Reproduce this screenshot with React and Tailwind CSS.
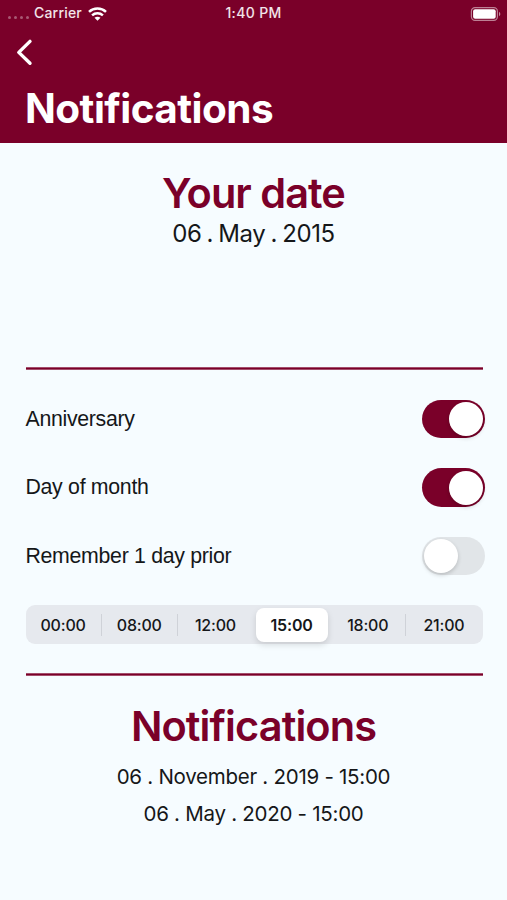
const times = ['00:00', '08:00', '12:00', '15:00', '18:00', '21:00'];

function StatusBar() {
  return (
    <div className="grid h-[27px] grid-cols-3 items-center pl-2 pr-[6px] text-[14px] font-medium leading-[25px] tracking-[0.2px] text-white/90">
      <div className="flex items-center">
        <div className="mr-[5px] mt-[7px] flex gap-[3px]">
          {[0, 1, 2, 3].map((i) => (
            <span key={i} className="size-[3px] rounded-full bg-white/35" />
          ))}
        </div>
        <span className="pb-[2px]">Carrier</span>
        <svg className="ml-[6px]" width="19" height="14" viewBox="0 0 19 14" fill="none" stroke="white" strokeWidth="2.5">
          <path d="M1 4.9C5.7 .4 13.3 .4 18 4.9" />
          <path d="M4.1 8.3C7.1 5.5 11.9 5.5 14.9 8.3" />
          <path d="M9.5 13.8L6.5 10.8C8.2 9.3 10.8 9.3 12.5 10.8Z" fill="white" stroke="none" />
        </svg>
      </div>
      <span className="-ml-[2px] pb-[2px] text-center tracking-[0.35px]">1:40 PM</span>
      <svg className="justify-self-end" width="31" height="14" viewBox="0 0 31 14">
        <rect x="1.4" y=".6" width="26" height="12.8" rx="3.6" fill="none" stroke="white" strokeOpacity=".5" strokeWidth="1.2" />
        <rect x="3.1" y="2.3" width="22.6" height="9.4" rx="2" fill="white" />
        <path d="M29 4.8C30.8 5.6 30.8 8.4 29 9.2Z" fill="white" fillOpacity=".55" />
      </svg>
    </div>
  );
}

function Toggle({ on }) {
  return (
    <div className={`flex h-[38.5px] w-[63px] items-center rounded-full px-[2px] ${on ? 'justify-end bg-[#7a0029]' : 'justify-start bg-[#e1e5e8]'}`}>
      <div className="size-[34px] rounded-full bg-white shadow-[0_2px_4px_rgba(0,0,0,0.18)]" />
    </div>
  );
}

function SettingRow({ label, on }) {
  return (
    <div className="flex h-[68.4px] items-center justify-between">
      <span className="pt-[1.6px] font-['Liberation_Sans',sans-serif] text-[21.3px] tracking-[-0.3px] text-[#151719]">{label}</span>
      <Toggle on={on} />
    </div>
  );
}

function Divider() {
  return <div className="ml-[25.5px] mr-[24.5px] h-[3px] border-y border-[#a34e6b] bg-[#7a0029]" />;
}

export default function App() {
  return (
    <div className="h-[900px] w-[507px] overflow-hidden bg-[#f6fcff] font-['Inter',sans-serif] text-[#151719]">
      <header className="h-[142.5px] bg-[#7a0029]">
        <StatusBar />
        <svg className="ml-[14.5px] mt-[11px]" width="18" height="28" viewBox="0 0 18 28" fill="none" stroke="white" strokeWidth="3.4" strokeLinecap="round" strokeLinejoin="round">
          <path d="M15 3.4L3.8 14.4L15 25.3" />
        </svg>
        <h1 className="ml-[25px] mt-[18px] text-[40.5px] font-bold leading-[50px] tracking-[-0.55px] text-white">Notifications</h1>
      </header>

      <section className="h-[224.5px] pt-[24px] text-center">
        <h2 className="text-[41.5px] font-semibold leading-[52px] tracking-[-0.98px] text-[#7a0029]">Your date</h2>
        <p className="mt-px text-[24px] leading-[28px] tracking-[-0.4px] [word-spacing:-1.2px]">06 . May . 2015</p>
      </section>

      <Divider />

      <section className="h-[235px] pl-[25.5px] pr-[22px] pt-[15px]">
        <SettingRow label="Anniversary" on />
        <SettingRow label="Day of month" on />
        <SettingRow label="Remember 1 day prior" on={false} />
      </section>

      <div className="ml-[25.5px] mr-[24.5px] grid h-[39px] grid-cols-6 rounded-[9px] bg-[#e6e9ee]">
        {times.map((time, i) => (
          <div
            key={time}
            className={`my-[2.5px] flex items-center justify-center pt-px text-[16px] tracking-[-0.2px] ${
              i === 3
                ? 'ml-[2px] mr-[2px] rounded-[8px] bg-white font-semibold shadow-[0_3px_6px_rgba(0,0,0,0.13)]'
                : 'font-medium'
            }`}
          >
            <span className="flex-1 pr-px text-center">{time}</span>
            {[0, 1, 4].includes(i) && <span className="-ml-px h-[22px] w-px bg-[#cfd2d8]" />}
          </div>
        ))}
      </div>

      <div className="h-[29px]" />
      <Divider />

      <section className="pt-[24px] text-center">
        <h2 className="text-[41.5px] font-semibold leading-[52px] tracking-[-0.9px] text-[#7a0029]">Notifications</h2>
        <p className="mt-[6px] text-[20.5px] leading-[37px] tracking-[-0.27px]">06 . November . 2019 - 15:00</p>
        <p className="text-[20.5px] leading-[37px] tracking-[-0.27px]">06 . May . 2020 - 15:00</p>
      </section>
    </div>
  );
}
